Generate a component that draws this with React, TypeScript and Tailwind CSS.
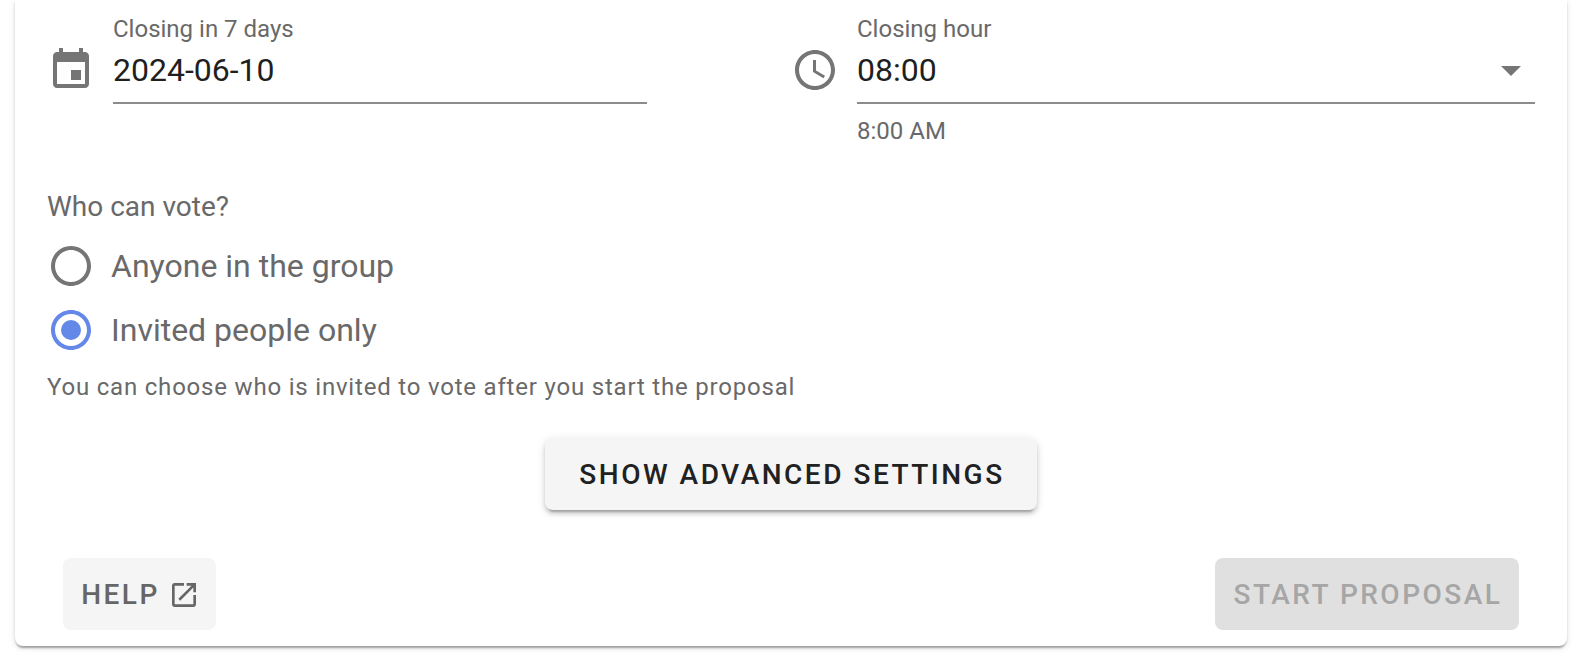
import React from 'react';

const font = { fontFamily: 'Roboto, sans-serif' };

const Icon: React.FC<{ d: string; className?: string; children?: React.ReactNode }> = ({ d, className, children }) => (
  <svg viewBox="0 0 24 24" fill="currentColor" className={className}>
    <path d={d} />
    {children}
  </svg>
);

const calendar = 'M17 12h-5v5h5v-5zM16 1v2H8V1H6v2H5c-1.11 0-1.99.9-1.99 2L3 19c0 1.1.89 2 2 2h14c1.1 0 2-.9 2-2V5c0-1.1-.9-2-2-2h-1V1h-2zm3 18H5V8h14v11z';
const clock = 'M11.99 2C6.47 2 2 6.48 2 12s4.47 10 9.99 10C17.52 22 22 17.52 22 12S17.52 2 11.99 2zM12 20c-4.42 0-8-3.58-8-8s3.58-8 8-8 8 3.58 8 8-3.58 8-8 8zM12.5 7H11v6l5.25 3.15.75-1.23-4.5-2.67z';
const radio = 'M12 2C6.48 2 2 6.48 2 12s4.48 10 10 10 10-4.48 10-10S17.52 2 12 2zm0 18c-4.42 0-8-3.58-8-8s3.58-8 8-8 8 3.58 8 8-3.58 8-8 8z';
const openNew = 'M19 19H5V5h7V3H5c-1.11 0-2 .9-2 2v14c0 1.1.89 2 2 2h14c1.1 0 2-.9 2-2v-7h-2v7zM14 3v2h3.59l-9.83 9.83 1.41 1.41L19 6.41V10h2V3h-7z';

export default function App() {
  return (
    <div style={font} className="h-[670px] w-[1580px] overflow-hidden bg-white pl-[15px] pr-[13px]">
      <div className="flex h-[646px] flex-col rounded-b-[8px] bg-white px-[32px] shadow-[0_4px_2px_-2px_rgba(0,0,0,0.2),0_2px_2px_0_rgba(0,0,0,0.14),0_2px_6px_0_rgba(0,0,0,0.12)]">
        {/* Closing date and hour */}
        <div className="flex pt-[13px]">
          <div className="flex w-[744px] shrink-0">
            <Icon d={calendar} className="mt-[33px] h-12 w-12 shrink-0 text-[#757575]" />
            <div className="ml-[18px] w-[534px]">
              <div className="h-[32px] text-[24px] leading-[32px] text-[#696969]">Closing in 7 days</div>
              <div className="flex h-[59px] items-center border-b-2 border-[#8c8c8c] pb-[8px] text-[32px] text-[#1f1f1f]">2024-06-10</div>
            </div>
          </div>
          <div className="flex min-w-0 flex-1">
            <Icon d={clock} className="mt-[33px] h-12 w-12 shrink-0 text-[#757575]" />
            <div className="ml-[18px] flex-1">
              <div className="h-[32px] text-[24px] leading-[32px] text-[#696969]">Closing hour</div>
              <div className="flex h-[59px] items-center justify-between border-b-2 border-[#8c8c8c] pb-[8px] text-[32px] text-[#1f1f1f]">
                <span>08:00</span>
                <Icon d="M7 10l5 5 5-5z" className="h-12 w-12 text-[#757575]" />
              </div>
              <div className="mt-[13px] h-[28px] text-[24px] leading-[28px] text-[#696969]">8:00 AM</div>
            </div>
          </div>
        </div>

        {/* Who can vote */}
        <div className="mt-[44px] text-[28px] leading-[36px] text-[#696969]">Who can vote?</div>
        <div className="mt-[9px] flex h-[64px] items-center">
          <Icon d={radio} className="h-12 w-12 shrink-0 text-[#757575]" />
          <span className="ml-[16px] text-[32px] text-[#696969]">Anyone in the group</span>
        </div>
        <div className="flex h-[64px] items-center">
          <Icon d={radio} className="h-12 w-12 shrink-0 text-[#6488e8]">
            <circle cx="12" cy="12" r="5" />
          </Icon>
          <span className="ml-[16px] text-[32px] text-[#696969]">Invited people only</span>
        </div>
        <div className="mt-[9px] text-[24px] leading-[32px] tracking-[0.8px] text-[#696969]">
          You can choose who is invited to vote after you start the proposal
        </div>

        {/* Advanced settings */}
        <div className="mt-[35px] flex justify-center">
          <button className="h-[72px] w-[492px] rounded-[8px] bg-[#f5f5f5] pl-[2px] pt-[1px] text-[28px] font-medium tracking-[2.5px] text-[#212121] shadow-[0_6px_2px_-4px_rgba(0,0,0,0.2),0_4px_4px_0_rgba(0,0,0,0.14),0_2px_10px_0_rgba(0,0,0,0.12)]">
            SHOW ADVANCED SETTINGS
          </button>
        </div>

        {/* Actions */}
        <div className="mt-[48px] flex items-center justify-between px-[16px]">
          <button className="flex h-[72px] w-[153px] items-center justify-center gap-[8px] rounded-[8px] bg-[#f5f5f5] pl-[2px] pt-[1px] text-[28px] font-medium tracking-[2.5px] text-[#666666]">
            HELP
            <Icon d={openNew} className="h-8 w-8" />
          </button>
          <button className="h-[72px] w-[304px] rounded-[8px] bg-[#e0e0e0] pl-[2px] pt-[1px] text-[28px] font-medium tracking-[2.5px] text-[#a6a6a6]">
            START PROPOSAL
          </button>
        </div>
      </div>
    </div>
  );
}
